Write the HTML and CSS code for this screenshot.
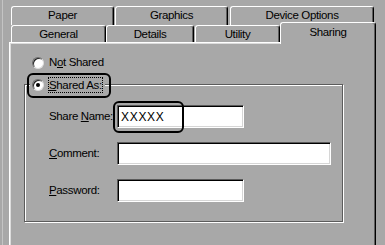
FILE: index.html
```html
<!DOCTYPE html>
<html>
<head>
<meta charset="utf-8">
<link rel="stylesheet" href="styles.css">
</head>
<body>
<div class="dialog">
  <div class="tab-row back">
    <div class="tab t-paper">Paper</div>
    <div class="tab t-graphics">Graphics</div>
    <div class="tab t-device">Device Options</div>
  </div>
  <div class="tab-row front">
    <div class="tab t-general">General</div>
    <div class="tab t-details">Details</div>
    <div class="tab t-utility">Utility</div>
    <div class="tab t-sharing selected">Sharing</div>
  </div>
  <div class="panel">
    <div class="radio-row">
      <span class="radio"></span>
      <span class="label">N<u>o</u>t Shared</span>
    </div>
    <div class="group">
      <div class="legend">
        <span class="radio on"></span>
        <span class="label focus"><u>S</u>hared As:</span>
      </div>
      <div class="fields">
        <span class="label">Share <u>N</u>ame:</span>
        <div class="field short"><span class="value">XXXXX</span></div>
        <span class="label"><u>C</u>omment:</span>
        <div class="field long"></div>
        <span class="label"><u>P</u>assword:</span>
        <div class="field short"></div>
      </div>
    </div>
  </div>
</div>
<div class="callout callout-radio"></div>
<div class="callout callout-name"></div>
</body>
</html>
```
FILE: styles.css
```css
* { box-sizing: border-box; }
html, body { margin: 0; padding: 0; }
body {
  width: 385px;
  height: 245px;
  overflow: hidden;
  background: #a8a8a8;
  font-family: "Liberation Sans", Arial, sans-serif;
  font-size: 11.5px;
  letter-spacing: -0.35px;
  color: #000;
  position: relative;
}
u { text-decoration: underline; text-underline-offset: 1px; }

.dialog {
  margin-left: 2px;
  border-left: 1px solid #c4c4c4;
  padding: 6px 0 0 6px;
  height: 245px;
}

.tab-row {
  display: flex;
  align-items: flex-start;
  margin-left: 2px;
}
.tab {
  flex: none;
  background: #a8a8a8;
  border-top: 1px solid #fff;
  border-left: 1px solid #fff;
  border-right: 1px solid #000;
  box-shadow: inset -1px 0 #5e5e5e;
  border-radius: 3px 3px 0 0;
  text-align: center;
}
.back .tab { height: 19px; line-height: 17px; }
.front .tab { height: 17px; line-height: 16px; }

.t-paper { width: 103px; }
.t-graphics { width: 113px; margin-left: 1px; }
.t-device { width: 144px; margin-left: 2px; }

.t-general { width: 95px; }
.t-details { width: 88px; }
.t-utility { width: 85px; margin-left: 1px; }
.front .t-sharing {
  width: 96px;
  height: 22px;
  line-height: 18px;
  margin-top: -3px;
  margin-bottom: -2px;
  position: relative;
  z-index: 1;
}

.panel {
  width: 367px;
  height: 203px;
  border: 1px solid;
  border-bottom: 0;
  border-color: #fff #000 #000 #fff;
  box-shadow: inset 1px 1px #dcdcdc, inset -1px 0 #5e5e5e;
  padding-top: 13px;
}

.radio-row {
  display: flex;
  align-items: center;
  height: 13px;
  margin-left: 22px;
  gap: 5px;
}
.radio {
  flex: none;
  width: 12px;
  height: 12px;
  border-radius: 50%;
  background: #fff;
  border: 1px solid;
  border-color: #6a6a6a #dedede #dedede #6a6a6a;
  box-shadow: inset 1px 1px #202020;
  display: flex;
  align-items: center;
  justify-content: center;
}
.radio.on::after {
  content: "";
  width: 4px;
  height: 4px;
  border-radius: 50%;
  background: #000;
}
.label { white-space: nowrap; line-height: 13px; }

.group {
  margin: 15px 0 0 14px;
  width: 319px;
  border: 1px solid #5c5c5c;
  box-shadow: inset 1px 1px #fff, 1px 1px #fff;
  padding-bottom: 19px;
}
.legend {
  display: flex;
  align-items: center;
  width: max-content;
  height: 13px;
  margin: -7px 0 0 5px;
  padding: 0 2px;
  background: #a8a8a8;
  gap: 4px;
}
.focus {
  border: 1px dotted #000;
  line-height: 14px;
}

.fields {
  display: grid;
  grid-template-columns: 68px auto;
  row-gap: 14px;
  align-items: center;
  justify-items: start;
  margin-top: 14px;
  padding-left: 24px;
}
.field {
  height: 23px;
  background: #fff;
  border: 1px solid;
  border-color: #5a5a5a #fff #fff #5a5a5a;
  box-shadow: inset 1px 1px #000, inset -1px -1px #d6d6d6;
  padding: 0 3px;
  display: flex;
  align-items: center;
}
.field.short { width: 127px; }
.field.long { width: 214px; }
.value { font-size: 12px; letter-spacing: 0.7px; line-height: 12px; }

.callout {
  position: absolute;
  border: 2px solid #000;
  border-radius: 6px;
}
.callout-radio { left: 27px; top: 73px; width: 84px; height: 25px; }
.callout-name { left: 113px; top: 101px; width: 71px; height: 32px; }
```
